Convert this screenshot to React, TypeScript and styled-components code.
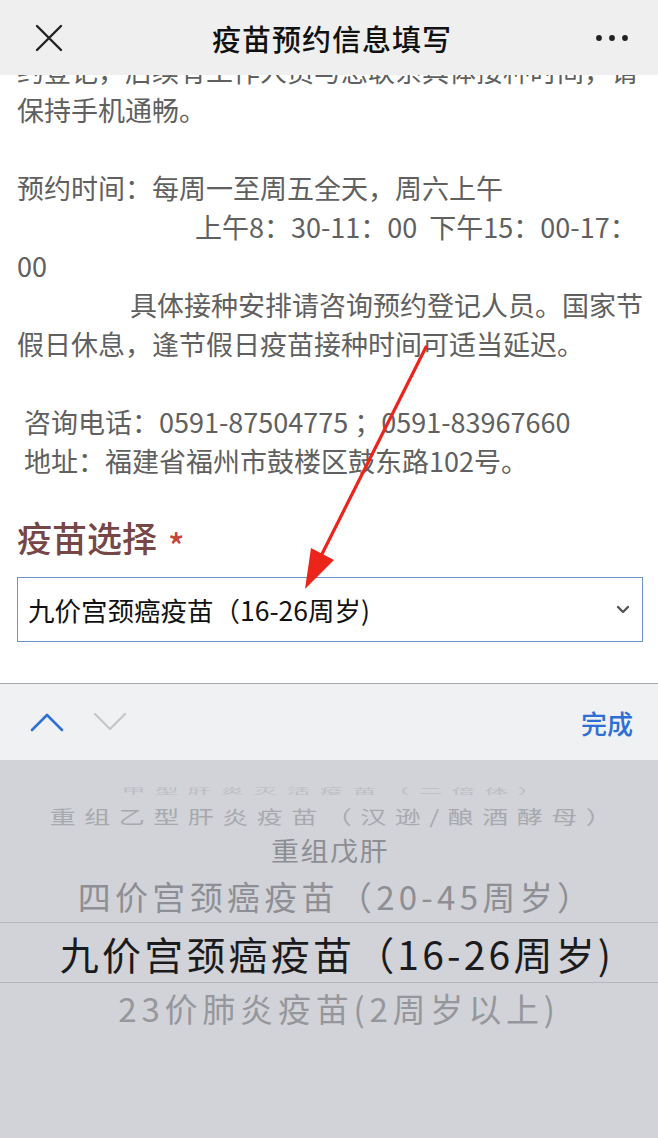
import React from "react";
import styled, { createGlobalStyle } from "styled-components";

const Global = createGlobalStyle`
  html, body { margin: 0; padding: 0; background: #ffffff; overflow: hidden; }
  body { font-family: "Noto Sans CJK SC", "Noto Sans", sans-serif; }
  * { box-sizing: border-box; }
`;

const Page = styled.div`
  width: 658px;
  height: 1138px;
  display: flex;
  flex-direction: column;
  overflow: hidden;
`;

const ScrollArea = styled.div`
  position: relative;
  flex: 1;
  background: #ffffff;
  overflow: hidden;
`;

const NavBar = styled.header`
  position: absolute;
  top: 0;
  left: 0;
  right: 0;
  height: 75px;
  background: #efefef;
  display: grid;
  grid-template-columns: 1fr auto 1fr;
  align-items: center;
  padding: 0 29px 0 35px;
  z-index: 2;
`;

const NavTitle = styled.h1`
  margin: 0;
  font-size: 29px;
  font-weight: 500;
  color: #111111;
  letter-spacing: 1px;
`;

const NavLeft = styled.div`
  display: flex;
  align-items: center;
`;

const NavRight = styled.div`
  display: flex;
  justify-content: flex-end;
  align-items: center;
`;

const Content = styled.div`
  padding: 51px 15px 0 17px;
  color: #606060;
  font-size: 27px;
  line-height: 39px;
`;

const Para = styled.p<{ $indent?: number; $pad?: number; $after?: number }>`
  margin: 0 0 ${(p) => p.$after ?? 0}px 0;
  padding-left: ${(p) => p.$pad ?? 0}px;
  text-indent: ${(p) => p.$indent ?? 0}px;
  white-space: pre;
`;

const FieldLabel = styled.div`
  margin-top: 33px;
  height: 48px;
  font-size: 35px;
  line-height: 48px;
  font-weight: 500;
  color: #774646;
  display: flex;
  align-items: center;
  gap: 11px;
`;

const Required = styled.span`
  color: #c8453e;
  font-size: 34px;
  line-height: 34px;
  height: 34px;
  padding-top: 8px;
`;

const SelectBox = styled.div`
  margin-top: 16px;
  height: 65px;
  border: 1.5px solid #6b93c6;
  display: flex;
  align-items: center;
  justify-content: space-between;
  padding: 0 12px 0 10px;
  color: #111111;
  font-size: 26.5px;
`;

const Toolbar = styled.div`
  height: 77px;
  border-top: 1px solid #a8a8a8;
  background: #f0f1f3;
  display: flex;
  align-items: center;
  justify-content: space-between;
  padding: 0 25px 0 30px;
`;

const ArrowGroup = styled.div`
  display: flex;
  align-items: center;
  gap: 29px;
`;

const DoneButton = styled.span`
  font-size: 26px;
  font-weight: 500;
  color: #2d6fd6;
`;

const Picker = styled.div`
  flex: 0 0 378px;
  background: #d1d3d8;
  display: flex;
  flex-direction: column;
  padding-top: 20px;
`;

const PickerRow = styled.div<{
  $h: number;
  $size: number;
  $color: string;
  $ls: number;
  $shift?: number;
  $sy?: number;
  $selected?: boolean;
}>`
  height: ${(p) => p.$h}px;
  display: flex;
  align-items: center;
  justify-content: center;
  padding-left: ${(p) => p.$shift ?? 0}px;
  white-space: nowrap;
  font-size: ${(p) => p.$size}px;
  letter-spacing: ${(p) => p.$ls}px;
  color: ${(p) => p.$color};
  border-top: ${(p) => (p.$selected ? "1px solid #b6b7bc" : "none")};
  border-bottom: ${(p) => (p.$selected ? "1px solid #b6b7bc" : "none")};
  & > span {
    display: inline-block;
    transform: scaleY(${(p) => p.$sy ?? 1});
  }
`;

const ArrowOverlay = styled.svg`
  position: absolute;
  top: 0;
  left: 0;
  pointer-events: none;
  z-index: 1;
`;

export default function App() {
  return (
    <Page>
      <Global />
      <ScrollArea>
        <NavBar>
          <NavLeft>
            <svg width="28" height="28" viewBox="0 0 28 28">
              <path d="M2 2 L26 26 M26 2 L2 26" stroke="#222" strokeWidth="2.4" strokeLinecap="round" />
            </svg>
          </NavLeft>
          <NavTitle>疫苗预约信息填写</NavTitle>
          <NavRight>
            <svg width="34" height="8" viewBox="0 0 34 8">
              <circle cx="4" cy="4" r="2.9" fill="#222" />
              <circle cx="17" cy="4" r="2.9" fill="#222" />
              <circle cx="30" cy="4" r="2.9" fill="#222" />
            </svg>
          </NavRight>
        </NavBar>

        <Content>
          <Para $after={39}>
            {"约登记，后续有工作人员与您联系具体接种时间，请"}
            <br />
            {"保持手机通畅。"}
          </Para>
          <Para>{"预约时间：每周一至周五全天，周六上午"}</Para>
          <Para $indent={178}>
            {"上午8：30-11：00  下午15：00-17："}
            <br />
            {"00"}
          </Para>
          <Para $indent={113} $after={39}>
            {"具体接种安排请咨询预约登记人员。国家节"}
            <br />
            {"假日休息，逢节假日疫苗接种时间可适当延迟。"}
          </Para>
          <Para $pad={7}>{"咨询电话：0591-87504775 ；0591-83967660"}</Para>
          <Para $pad={7}>{"地址：福建省福州市鼓楼区鼓东路102号。"}</Para>

          <FieldLabel>
            疫苗选择<Required>*</Required>
          </FieldLabel>
          <SelectBox>
            <span>九价宫颈癌疫苗（16-26周岁)</span>
            <svg width="14" height="10" viewBox="0 0 14 10">
              <path d="M2 2 L7 7 L12 2" stroke="#555" strokeWidth="2.4" fill="none" strokeLinecap="round" strokeLinejoin="round" />
            </svg>
          </SelectBox>
        </Content>

        <ArrowOverlay width="658" height="683" viewBox="0 0 658 683">
          <line x1="426" y1="347" x2="321" y2="556" stroke="#ec2419" strokeWidth="3.2" strokeLinecap="round" />
          <polygon points="305,589 334,560 311,548" fill="#ec2419" />
        </ArrowOverlay>
      </ScrollArea>

      <Toolbar>
        <ArrowGroup>
          <svg width="34" height="20" viewBox="0 0 34 20">
            <path d="M2 18 L17 3 L32 18" stroke="#2f6fd6" strokeWidth="2.6" fill="none" strokeLinecap="round" strokeLinejoin="round" />
          </svg>
          <svg width="34" height="20" viewBox="0 0 34 20">
            <path d="M2 2 L17 17 L32 2" stroke="#c5c6c9" strokeWidth="2.2" fill="none" strokeLinecap="round" strokeLinejoin="round" />
          </svg>
        </ArrowGroup>
        <DoneButton>完成</DoneButton>
      </Toolbar>

      <Picker>
        <PickerRow $h={20} $size={24} $color="#bdbec3" $ls={9} $shift={14} $sy={0.35}>
          <span>甲型肝炎灭活疫苗（二倍体）</span>
        </PickerRow>
        <PickerRow $h={30} $size={26} $color="#a8a9ae" $ls={8.5} $shift={12} $sy={0.72}>
          <span>重组乙型肝炎疫苗（汉逊/酿酒酵母）</span>
        </PickerRow>
        <PickerRow $h={40} $size={28} $color="#8d8e93" $ls={1.5} $shift={2} $sy={0.92}>
          <span>重组戊肝</span>
        </PickerRow>
        <PickerRow $h={52} $size={33} $color="#8e8f94" $ls={4.3} $shift={14}>
          <span>四价宫颈癌疫苗（20-45周岁）</span>
        </PickerRow>
        <PickerRow $h={61} $size={39} $color="#1b1b1d" $ls={3.2} $shift={16} $selected>
          <span>九价宫颈癌疫苗（16-26周岁)</span>
        </PickerRow>
        <PickerRow $h={50} $size={33} $color="#96979c" $ls={4.8} $shift={20}>
          <span>23价肺炎疫苗(2周岁以上)</span>
        </PickerRow>
      </Picker>
    </Page>
  );
}
